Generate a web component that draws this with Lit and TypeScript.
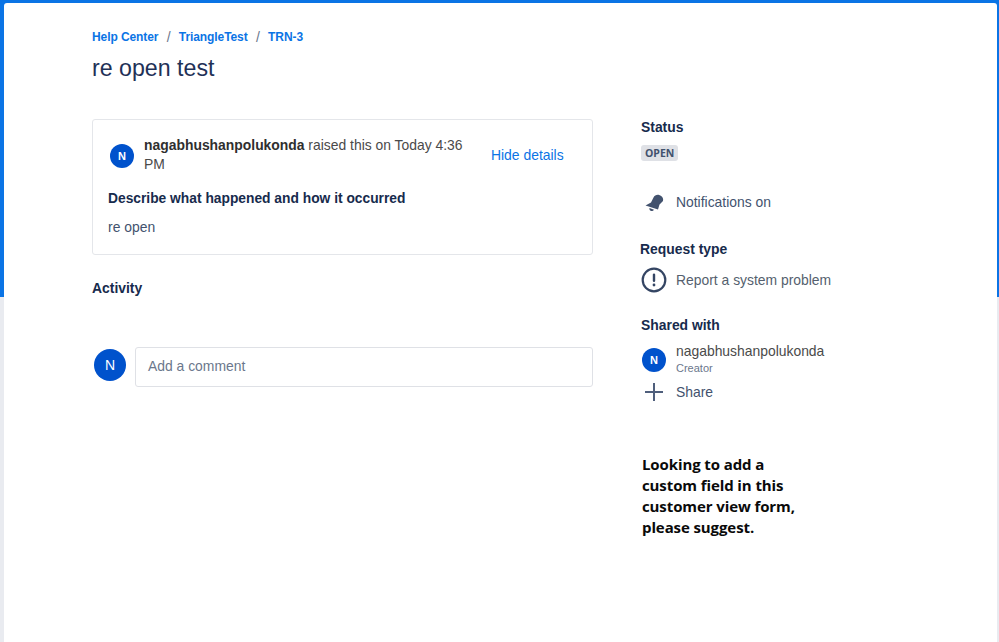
import { LitElement, html, css } from "lit";
import { customElement } from "lit/decorators.js";

@customElement("app-root")
export class AppRoot extends LitElement {
  static styles = css`
    :host {
      display: block;
      width: 999px;
      height: 642px;
      overflow: hidden;
      box-sizing: border-box;
      padding: 3px 2px 0 4px;
      background: linear-gradient(#0b74e5 0, #0b74e5 297px, #e9ebf0 297px);
      font-family: "Liberation Sans", Arial, sans-serif;
      color: #172b4d;
      font-size: 13.9px;
    }
    .panel {
      height: 639px;
      box-sizing: border-box;
      background: #fff;
      border-radius: 3px 3px 0 0;
      padding: 26px 0 0 88px;
    }
    .crumbs {
      display: flex;
      align-items: center;
      height: 16px;
      font-size: 12px;
      font-weight: 700;
      letter-spacing: -0.09px;
      color: #0b74e5;
    }
    .sep {
      font-size: 14px;
      font-weight: 400;
      color: #6b778c;
      width: 20.500px;
      text-align: center;
      margin-top: -1px;
    }
    h1 {
      margin: 7px 0 0;
      font-size: 23.2px;
      line-height: 32px;
      font-weight: 400;
      color: #1f3157;
    }
    .cols {
      display: flex;
      margin-top: 35px;
    }
    .main {
      width: 501px;
    }
    .side {
      margin: -1px 0 0 48px;
      width: 260px;
    }
    .card {
      box-sizing: border-box;
      height: 136px;
      border: 1px solid #e4e6ea;
      border-radius: 3px;
      padding: 16px 15px 0 15px;
    }
    .raised {
      display: flex;
      align-items: flex-start;
    }
    .av {
      flex: none;
      display: flex;
      align-items: center;
      justify-content: center;
      border-radius: 50%;
      background: #0052cc;
      color: #fff;
      font-weight: 700;
    }
    .av.sm {
      width: 24px;
      height: 24px;
      font-size: 11px;
    }
    .av.lg {
      width: 32px;
      height: 32px;
      font-size: 14px;
      font-weight: 400;
    }
    .raised .av {
      margin: 8px 10px 0 2px;
    }
    .who {
      width: 332px;
      line-height: 19px;
      color: #4a4a4a;
    }
    .who b {
      color: #2f2f2f;
    }
    .hide {
      margin: 11px 0 0 15px;
      color: #0b74e5;
      white-space: nowrap;
      line-height: 16px;
    }
    .desc {
      margin-top: 16px;
      font-size: 13.8px;
      font-weight: 700;
      line-height: 18px;
      color: #172b4d;
    }
    .val {
      margin-top: 10px;
      line-height: 18px;
      color: #42526e;
    }
    .h {
      font-weight: 700;
      line-height: 18px;
      color: #172b4d;
    }
    .activity {
      margin-top: 24px;
    }
    .comment {
      display: flex;
      align-items: flex-start;
      margin-top: 50px;
    }
    .comment .av {
      margin: 2px 9px 0 2px;
    }
    .input {
      flex: 1;
      box-sizing: border-box;
      height: 40px;
      border: 1px solid #dfe1e6;
      border-radius: 3px;
      padding: 0 12px 2px;
      display: flex;
      align-items: center;
      color: #6b778c;
    }
    .lozenge {
      display: inline-block;
      margin-top: 9px;
      padding: 0 4px;
      height: 16px;
      line-height: 16px;
      border-radius: 3px;
      background: #dfe1e6;
      color: #42526e;
      font-family: "Open Sans", sans-serif;
      font-size: 10.5px;
      font-weight: 700;
    }
    .row {
      display: flex;
      align-items: center;
      color: #42526e;
    }
    .ico {
      flex: none;
      width: 26px;
      height: 26px;
      margin-right: 9px;
    }
    .notif {
      margin-top: 28px;
    }
    .type {
      color: #555f6e;
      margin-top: 9px;
    }
    .s2 {
      margin-top: 25px;
      margin-left: -1px;
    }
    .s3 {
      margin-top: 23px;
    }
    .person {
      display: flex;
      margin-top: 2px;
    }
    .person .av {
      margin: 12px 10px 0 1px;
    }
    .pname {
      line-height: 18px;
      color: #4a4a4a;
      margin-top: 6px;
    }
    .prole {
      font-size: 11px;
      line-height: 14px;
      color: #6b778c;
      margin-top: 1px;
    }
    .share {
      margin-top: 4px;
    }
    .note {
      margin: 49px 0 0 1px;
      font-family: "Open Sans", sans-serif;
      font-weight: 700;
      font-size: 15px;
      line-height: 21px;
      color: #0a0a0a;
      width: 200px;
      letter-spacing: -0.1px;
    }
  `;

  render() {
    return html`
      <div class="panel">
        <div class="crumbs">
          <span>Help Center</span><span class="sep">/</span>
          <span>TriangleTest</span><span class="sep">/</span>
          <span>TRN-3</span>
        </div>
        <h1>re open test</h1>
        <div class="cols">
          <div class="main">
            <div class="card">
              <div class="raised">
                <div class="av sm">N</div>
                <div class="who"><b>nagabhushanpolukonda</b> raised this on Today 4:36 PM</div>
                <div class="hide">Hide details</div>
              </div>
              <div class="desc">Describe what happened and how it occurred</div>
              <div class="val">re open</div>
            </div>
            <div class="h activity">Activity</div>
            <div class="comment">
              <div class="av lg">N</div>
              <div class="input">Add a comment</div>
            </div>
          </div>
          <div class="side">
            <div class="h">Status</div>
            <span class="lozenge">OPEN</span>
            <div class="row notif">
              <svg class="ico" viewBox="0 0 26 26">
                <path fill="#42526e" d="M4.500 16.500L10 13.500L12.500 8.500C13.500 6.500 15.500 5.500 17.500 5.800L19.800 6.800C21.700 8 22.600 10 22 12L18.500 15.500L17 20.500Z" />
                <path fill="#42526e" d="M8.500 19l4.500 1.700c-.8 1.200-2.200 1.500-3.400 1-1-.5-1.500-1.600-1.100-2.700z" />
              </svg>
              <span>Notifications on</span>
            </div>
            <div class="h s2">Request type</div>
            <div class="row type">
              <svg class="ico" viewBox="0 0 26 26">
                <circle cx="13" cy="13" r="11.300" fill="none" stroke="#344563" stroke-width="2.200" />
                <rect x="11.800" y="6.500" width="2.400" height="8.500" rx="1.200" fill="#344563" />
                <circle cx="13" cy="18" r="1.400" fill="#344563" />
              </svg>
              <span>Report a system problem</span>
            </div>
            <div class="h s3">Shared with</div>
            <div class="person">
              <div class="av sm">N</div>
              <div>
                <div class="pname">nagabhushanpolukonda</div>
                <div class="prole">Creator</div>
              </div>
            </div>
            <div class="row share">
              <svg class="ico" viewBox="0 0 26 26">
                <path d="M13 4v18M4 13h18" stroke="#4f5f7c" stroke-width="2" fill="none" />
              </svg>
              <span>Share</span>
            </div>
            <div class="note">Looking to add a<br />custom field in this<br />customer view form,<br />please suggest.</div>
          </div>
        </div>
      </div>
    `;
  }
}
